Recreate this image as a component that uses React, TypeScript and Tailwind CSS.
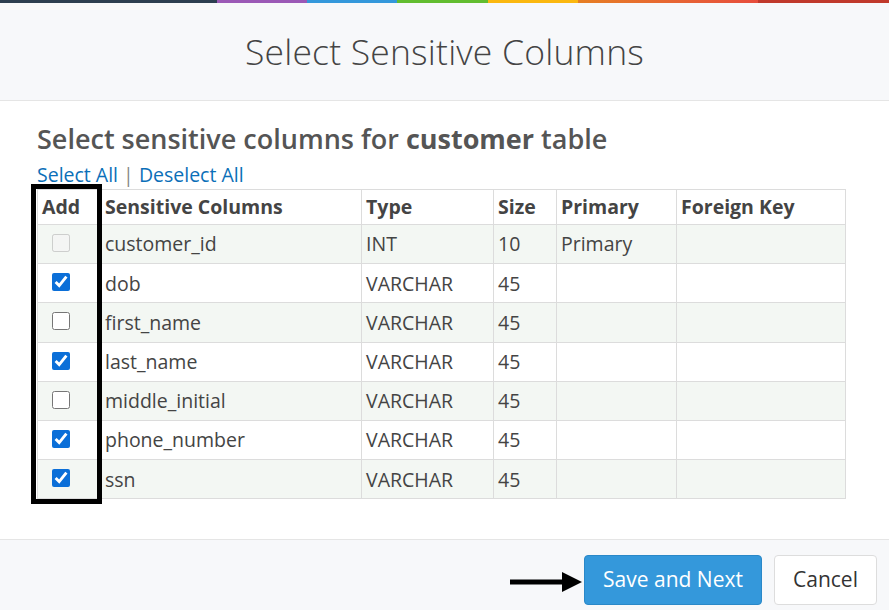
import { useState } from 'react'

interface Column {
  name: string
  type: string
  size: string
  primary: string
  foreign: string
  checked: boolean
  disabled?: boolean
}

const COLUMNS: Column[] = [
  { name: 'customer_id', type: 'INT', size: '10', primary: 'Primary', foreign: '', checked: false, disabled: true },
  { name: 'dob', type: 'VARCHAR', size: '45', primary: '', foreign: '', checked: true },
  { name: 'first_name', type: 'VARCHAR', size: '45', primary: '', foreign: '', checked: false },
  { name: 'last_name', type: 'VARCHAR', size: '45', primary: '', foreign: '', checked: true },
  { name: 'middle_initial', type: 'VARCHAR', size: '45', primary: '', foreign: '', checked: false },
  { name: 'phone_number', type: 'VARCHAR', size: '45', primary: '', foreign: '', checked: true },
  { name: 'ssn', type: 'VARCHAR', size: '45', primary: '', foreign: '', checked: true },
]

export default function App() {
  const [rows, setRows] = useState(COLUMNS)

  const toggle = (i: number) =>
    setRows(rows.map((r, j) => (j === i ? { ...r, checked: !r.checked } : r)))

  return (
    <div
      className="w-[889px] h-[610px] bg-white text-[#333] overflow-hidden flex flex-col"
      style={{ fontFamily: '"Open Sans", "Noto Sans", sans-serif' }}
    >
      {/* top colour strip */}
      <div className="flex h-[3px] shrink-0">
        <div className="w-[217px] bg-[#2c3e50]" />
        <div className="w-[90px] bg-[#9b59b6]" />
        <div className="w-[90px] bg-[#3498db]" />
        <div className="w-[91px] bg-[#62bd2f]" />
        <div className="w-[90px] bg-[#fbb80f]" />
        <div className="w-[180px] bg-gradient-to-r from-[#e67e22] to-[#e74c3c]" />
        <div className="flex-1 bg-[#c0392b]" />
      </div>

      {/* header */}
      <div className="h-[98px] shrink-0 bg-[#f7f8fa] border-b border-[#e5e5e5] flex items-center justify-center">
        <h1 className="text-[35.5px] font-light text-[#444] tracking-[0.2px]">Select Sensitive Columns</h1>
      </div>

      {/* body */}
      <div className="flex-1 pl-[37px] pr-[42px] pt-[20px]">
        <h2 className="text-[27px] font-semibold text-[#555] leading-[36px]">
          Select sensitive columns for <span className="font-bold">customer</span> table
        </h2>
        <div className="text-[19.5px] leading-[28px] mt-[4px] text-[#888]">
          <a className="text-[#0b6fb8] cursor-pointer">Select All</a> | <a className="text-[#0b6fb8] cursor-pointer">Deselect All</a>
        </div>

        <div className="relative">
          <table className="w-[809px] border-collapse text-[19.5px] table-fixed">
            <colgroup>
              <col className="w-[63px]" />
              <col className="w-[261px]" />
              <col className="w-[132px]" />
              <col className="w-[63px]" />
              <col className="w-[120px]" />
              <col />
            </colgroup>
            <thead>
              <tr className="h-[35px]">
                {['Add', 'Sensitive Columns', 'Type', 'Size', 'Primary', 'Foreign Key'].map((h) => (
                  <th
                    key={h}
                    className="border border-[#dcdcdc] px-[4px] text-left font-bold text-[#444] align-middle"
                  >
                    {h}
                  </th>
                ))}
              </tr>
            </thead>
            <tbody>
              {rows.map((r, i) => (
                <tr key={r.name} className={`h-[39.2px] ${i % 2 === 0 ? 'bg-[#f3f7f3]' : 'bg-white'}`}>
                  <td className="border border-[#dcdcdc] pl-[14px] text-left align-middle">
                    <input
                      type="checkbox"
                      checked={r.checked}
                      disabled={r.disabled}
                      onChange={() => toggle(i)}
                      className="block w-[18px] h-[18px] m-0 -mt-[2px] accent-[#0b6fd8]"
                    />
                  </td>
                  <td className="border border-[#dcdcdc] px-[4px] text-[#444]">{r.name}</td>
                  <td className="border border-[#dcdcdc] px-[4px] text-[#444]">{r.type}</td>
                  <td className="border border-[#dcdcdc] px-[4px] text-[#444]">{r.size}</td>
                  <td className="border border-[#dcdcdc] px-[4px] text-[#444]">{r.primary}</td>
                  <td className="border border-[#dcdcdc] px-[4px] text-[#444]">{r.foreign}</td>
                </tr>
              ))}
            </tbody>
          </table>
          {/* highlight box around Add column */}
          <div className="absolute left-[-6px] top-[-5px] w-[71px] h-[320px] border-[5px] border-black pointer-events-none" />
        </div>
      </div>

      {/* footer */}
      <div className="h-[71px] shrink-0 bg-[#f7f8fa] border-t border-[#e5e5e5] flex items-start pt-[15px] justify-end pr-[12px] gap-[12px]">
        <svg width="72" height="22" viewBox="0 0 72 22" className="mt-[16px] mr-[-10px]">
          <rect x="0" y="8.5" width="54" height="5" fill="#000" />
          <polygon points="52,1 72,11 52,21" fill="#000" />
        </svg>
        <button className="h-[50px] w-[178px] rounded-[4px] bg-[#3498db] border border-[#2a88c8] text-white text-[21px]">
          Save and Next
        </button>
        <button className="h-[50px] w-[103px] rounded-[4px] bg-white border border-[#ddd] text-[#333] text-[21px]">
          Cancel
        </button>
      </div>
    </div>
  )
}
